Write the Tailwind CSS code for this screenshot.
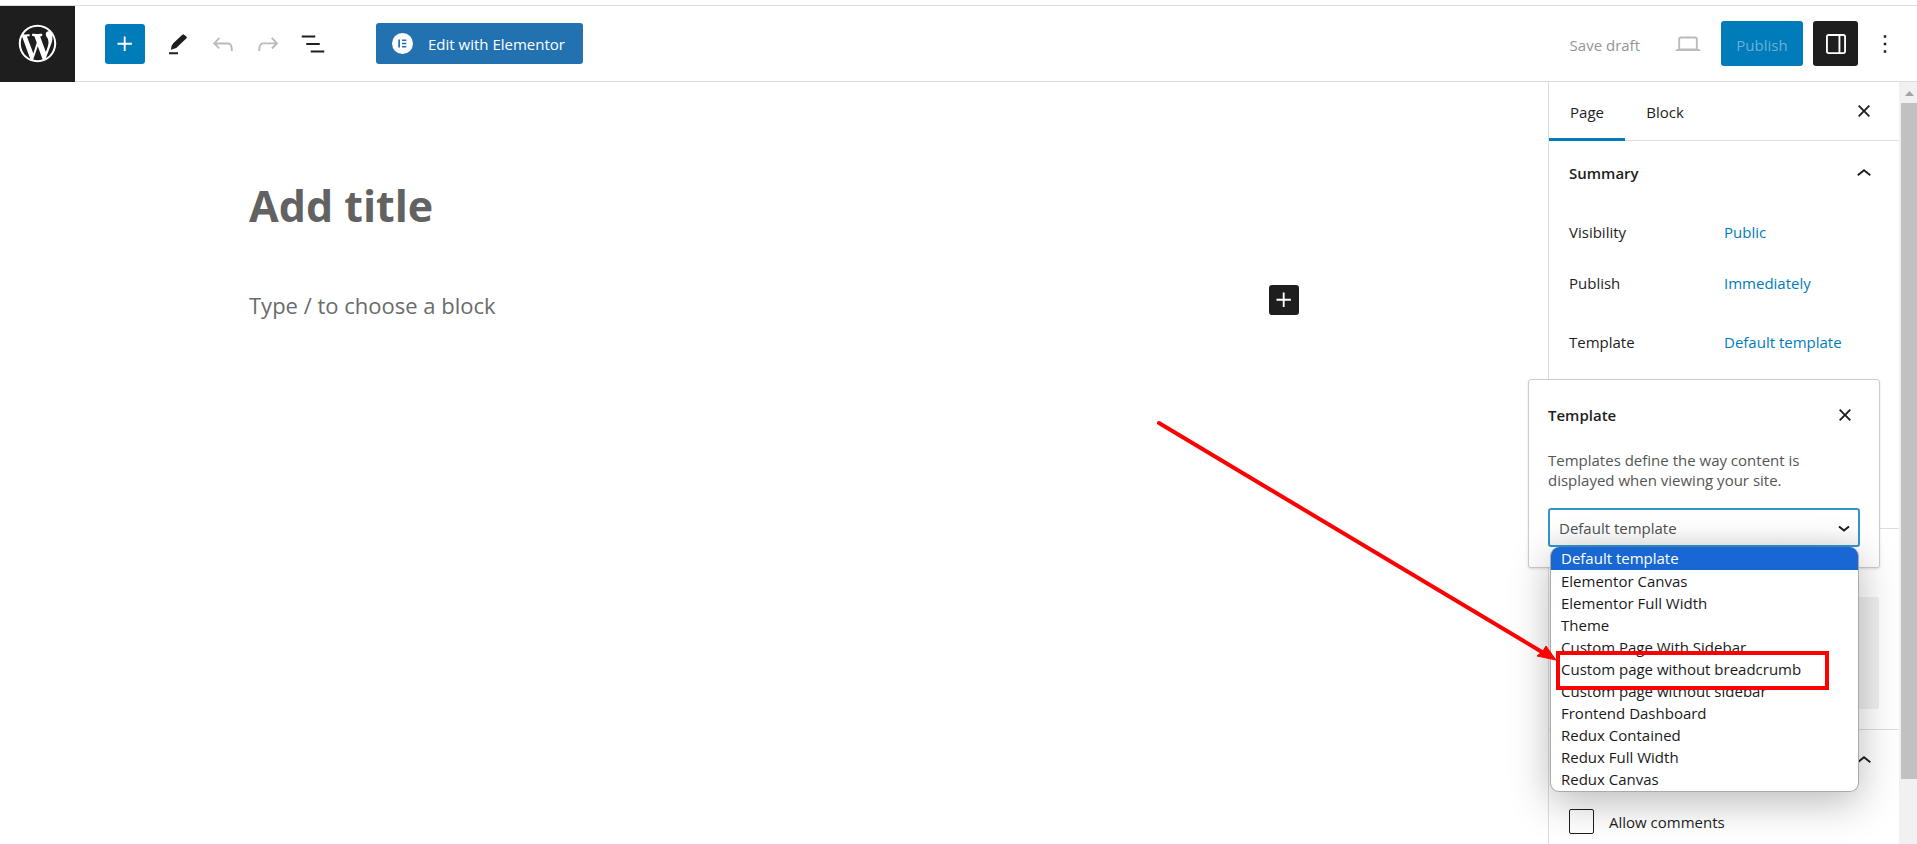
<!DOCTYPE html>
<html lang="en">
<head>
    <meta charset="UTF-8">
    <meta name="viewport" content="width=device-width, initial-scale=1.0">
    <title>Add New Page</title>
    <script src="https://cdn.jsdelivr.net/npm/@tailwindcss/browser@4"></script>
</head>
<body class="h-screen overflow-hidden bg-white pt-[5px] flex flex-col font-['Open_Sans','Noto_Sans',sans-serif] text-[15px] text-[#1e1e1e]">

    <!-- Top toolbar -->
    <header class="shrink-0 h-[77px] flex items-center border-y border-[#ddd]">
        <a href="#" aria-label="View pages" class="w-[75px] h-[76px] bg-[#1e1e1e] text-white flex items-center justify-center">
            <svg class="w-[45px] h-[45px]" viewBox="-2 -2 24 24" fill="currentColor"><path d="M20 10c0-5.51-4.49-10-10-10C4.48 0 0 4.49 0 10c0 5.52 4.48 10 10 10 5.51 0 10-4.48 10-10zM7.78 15.37L4.37 6.22c.55-.02 1.17-.08 1.17-.08.5-.06.44-1.13-.06-1.11 0 0-1.45.11-2.37.11-.18 0-.37 0-.58-.01C4.12 2.69 6.87 1.11 10 1.11c2.33 0 4.45.87 6.05 2.34-.68-.11-1.65.39-1.65 1.58 0 .74.45 1.36.9 2.1.35.61.55 1.36.55 2.46 0 1.49-1.4 5-1.4 5l-3.03-8.37c.54-.02.82-.17.82-.17.5-.05.44-1.25-.06-1.22 0 0-1.44.12-2.38.12-.87 0-2.33-.12-2.33-.12-.5-.03-.56 1.2-.06 1.22l.92.08 1.26 3.41zM17.41 10c.24-.64.74-1.87.43-4.25.7 1.29 1.05 2.71 1.05 4.25 0 3.29-1.73 6.24-4.4 7.78.97-2.59 1.94-5.2 2.92-7.78zM6.1 18.09C3.12 16.65 1.11 13.53 1.11 10c0-1.3.23-2.48.72-3.59C3.25 10.3 4.67 14.2 6.1 18.09zm4.03-6.63l2.58 6.98c-.86.29-1.76.45-2.71.45-.79 0-1.57-.11-2.29-.33.81-2.38 1.62-4.74 2.42-7.1z"/></svg>
        </a>

        <button aria-label="Toggle block inserter" class="ml-[30px] w-10 h-10 rounded-[3px] bg-[#007cba] text-white flex items-center justify-center">
            <svg class="w-[30px] h-[30px]" viewBox="0 0 24 24" fill="currentColor"><path d="M11 12.5V17.5H12.5V12.5H17.5V11H12.5V6H11V11H6V12.5H11Z"/></svg>
        </button>
        <div class="flex items-center gap-[15px] ml-[18px]">
            <button aria-label="Tools" class="w-[30px] h-10 flex items-center justify-center">
                <svg class="w-[30px] h-[30px]" viewBox="0 0 24 24" fill="currentColor"><path d="M16.300 4.200L19.200 6.300 18.600 7.500 10.600 15.100 6.300 16.600 6.900 13.400 8.400 11.200 15 4.900zM4.800 18.600h7.200v1.500H4.800z"/></svg>
            </button>
            <button aria-label="Undo" class="w-[30px] h-10 text-[#bbb] flex items-center justify-center">
                <svg class="w-[30px] h-[30px]" viewBox="0 0 24 24" fill="currentColor"><path d="M18.3 11.7c-.6-.6-1.4-.9-2.3-.9H6.7l2.9-3.3-1.1-1-4.5 5L8.5 16l1-1-2.7-2.7H16c.5 0 .9.2 1.3.5 1 1 1 3.4 1 4.5v.3h1.5v-.2c0-1.5 0-4.3-1.5-5.7z"/></svg>
            </button>
            <button aria-label="Redo" class="w-[30px] h-10 text-[#bbb] flex items-center justify-center">
                <svg class="w-[30px] h-[30px]" viewBox="0 0 24 24" fill="currentColor"><path d="M15.6 6.5l-1.1 1 2.9 3.3H8c-.9 0-1.7.3-2.3.9-1.4 1.5-1.4 4.2-1.4 5.6v.2h1.5v-.3c0-1.1 0-3.5 1-4.5.3-.3.7-.5 1.3-.5h9.2L14.5 15l1.1 1.1 4.6-4.6-4.6-5z"/></svg>
            </button>
            <button aria-label="Document overview" class="w-[30px] h-10 flex items-center justify-center">
                <svg class="w-[30px] h-[30px]" viewBox="0 0 24 24" fill="currentColor"><path d="M13.8 5.2H3v1.5h10.8V5.2zm-3.6 12v1.5H21v-1.5H10.2zm7.2-6H6.6v1.5h10.8v-1.5z"/></svg>
            </button>
        </div>

        <button class="ml-[48px] h-[41px] w-[207px] pl-4 rounded-[3px] bg-[#2271b1] text-white flex items-center gap-[15px] whitespace-nowrap">
            <svg class="w-[21px] h-[21px] shrink-0" viewBox="0 0 21 21"><circle cx="10.500" cy="10.500" r="10.500" fill="#fff"/><path d="M6.300 6.500h1.700v8h-1.700zM10 6.500h4.300v1.500H10zM10 9.750h4.300v1.500H10zM10 13h4.300v1.500H10z" fill="#2271b1"/></svg>
            <span class="pt-px">Edit with Elementor</span>
        </button>

        <div class="ml-auto flex items-center">
            <button class="pt-1 text-[#949494]" disabled>Save draft</button>
            <button aria-label="Preview" class="ml-[33px] text-[#bbb]">
                <svg class="w-[30px] h-[30px]" viewBox="0 0 24 24" fill="currentColor"><path d="M20.500 16h-.7V8c0-1.100-.9-2-2-2H6.200c-1.100 0-2 .9-2 2v8h-.7c-.8 0-1.500.7-1.500 1.500h20c0-.8-.7-1.500-1.500-1.500zM5.700 8c0-.3.2-.5.5-.5h11.600c.3 0 .5.2.5.5v7.600H5.700V8z"/></svg>
            </button>
            <button class="ml-[18px] w-[82px] h-[45px] pt-1 rounded-[3px] bg-[#007cba] text-[#66b0d6]">Publish</button>
            <button aria-label="Settings" class="ml-[10px] w-[45px] h-[45px] rounded-[3px] bg-[#1e1e1e] text-white flex items-center justify-center">
                <svg class="w-[30px] h-[30px]" viewBox="0 0 24 24" fill="currentColor"><path d="M18 4H6c-1.100 0-2 .9-2 2v12c0 1.100.9 2 2 2h12c1.100 0 2-.9 2-2V6c0-1.100-.9-2-2-2zm-4 14.500H6c-.3 0-.5-.2-.5-.5V6c0-.3.2-.5.5-.5h8v13zm4.500-.5c0 .3-.2.5-.5.5h-2.500v-13H18c.3 0 .5.2.5.5v12z"/></svg>
            </button>
            <button aria-label="Options" class="ml-3 mr-[17px]">
                <svg class="w-[30px] h-[30px]" viewBox="0 0 24 24" fill="currentColor"><path d="M13 19h-2v-2h2v2zm0-6h-2v-2h2v2zm0-6h-2V5h2v2z"/></svg>
            </button>
        </div>
    </header>

    <div class="flex-1 min-h-0 flex">

        <!-- Editor canvas -->
        <main class="flex-1 min-w-0">
            <div class="max-w-[1050px] mx-auto pt-[94px]">
                <input type="text" aria-label="Add title" placeholder="Add title" class="block w-full h-[60px] text-[43px] font-bold outline-none placeholder:text-[#626262]">
                <div class="mt-[49px] h-[30px] flex items-center">
                    <input type="text" aria-label="Block" placeholder="Type / to choose a block" class="flex-1 h-10 mt-[10px] text-[22px] outline-none placeholder:text-[#6b6b6b]">
                    <button aria-label="Add block" class="w-[30px] h-[30px] rounded-[3px] bg-[#1e1e1e] text-white">
                        <svg class="w-[30px] h-[30px]" viewBox="0 0 24 24" fill="currentColor"><path d="M11 12.500V17.500H12.500V12.500H17.500V11H12.500V6H11V11H6V12.500H11Z"/></svg>
                    </button>
                </div>
            </div>
        </main>

        <!-- Settings sidebar -->
        <aside class="relative w-[351px] shrink-0 border-l border-[#ddd]">
            <div class="h-[59px] flex border-b border-[#ddd]">
                <button class="w-[76px] h-[59px] pt-[5px] border-b-3 border-[#007cba] font-medium">Page</button>
                <button class="w-20 h-[59px] pt-[2px] font-medium">Block</button>
                <button aria-label="Close settings" class="ml-auto mr-5">
                    <svg class="w-[30px] h-[30px]" viewBox="0 0 24 24" fill="currentColor"><path d="M12 13.060l3.712 3.713 1.061-1.060L13.061 12l3.712-3.712-1.060-1.060L12 10.938 8.288 7.227l-1.061 1.060L10.939 12l-3.712 3.712 1.060 1.061L12 13.061z"/></svg>
                </button>
            </div>

            <section class="h-[388px] px-5 border-b border-[#ddd]">
                <h2 class="h-[65px] font-semibold">
                    <button class="w-full h-full flex items-center justify-between">Summary
                        <svg class="w-[30px] h-[30px]" viewBox="0 0 24 24" fill="currentColor"><path d="M6.500 12.400L12 8l5.500 4.400-.9 1.200L12 10l-4.500 3.600-1-1.200z"/></svg>
                    </button>
                </h2>
                <div class="h-[53px] flex items-center"><span class="w-[155px]">Visibility</span><a href="#" class="text-[#007cba]">Public</a></div>
                <div class="h-[49px] flex items-center"><span class="w-[155px]">Publish</span><a href="#" class="text-[#007cba]">Immediately</a></div>
                <div class="h-[69px] flex items-center"><span class="w-[155px]">Template</span><a href="#" class="text-[#007cba]">Default template</a></div>
            </section>

            <section class="h-[201px] px-5 pt-[68px] border-b border-[#ddd]">
                <div class="h-[112px] rounded-[2px] bg-[#f0f0f0]"></div>
            </section>

            <section class="px-5">
                <button aria-label="Discussion" class="w-full h-[61px] flex items-center justify-end">
                    <svg class="w-[30px] h-[30px]" viewBox="0 0 24 24" fill="currentColor"><path d="M6.500 12.400L12 8l5.500 4.400-.9 1.200L12 10l-4.500 3.600-1-1.200z"/></svg>
                </button>
                <div class="pt-[18px] flex items-center gap-[15px]">
                    <input id="allow-comments" type="checkbox" class="appearance-none w-[25px] h-[25px] rounded-[2px] border border-[#1e1e1e] bg-white">
                    <label for="allow-comments" class="pt-px">Allow comments</label>
                </div>
            </section>

            <!-- Template popover -->
            <div class="absolute -left-[21px] top-[297px] w-[352px] h-[189px] px-[19px] bg-white border border-[#ccc] rounded-[3px] shadow-sm">
                <div class="h-[70px] flex items-center justify-between">
                    <h2 class="font-semibold">Template</h2>
                    <button aria-label="Close">
                        <svg class="w-[30px] h-[30px]" viewBox="0 0 24 24" fill="currentColor"><path d="M12 13.060l3.712 3.713 1.061-1.060L13.061 12l3.712-3.712-1.060-1.060L12 10.938 8.288 7.227l-1.061 1.060L10.939 12l-3.712 3.712 1.060 1.061L12 13.061z"/></svg>
                    </button>
                </div>
                <p class="leading-5 text-[#555]">Templates define the way content is displayed when viewing your site.</p>
                <div class="relative mt-[18px]">
                    <select aria-label="Template" class="appearance-none block w-full h-[39px] px-[9px] pt-[2px] rounded-[3px] border-2 border-[#3594c7] bg-linear-to-b from-white from-50% to-[#f4f4f4] text-[#505050] outline-none">
                        <option>Default template</option>
                        <option>Elementor Canvas</option>
                    </select>
                    <svg class="absolute right-1 top-2 w-6 h-6 pointer-events-none" viewBox="0 0 24 24" fill="none" stroke="currentColor" stroke-width="2"><path d="M7 10.500l5 4 5-4"/></svg>

                    <!-- Open option list -->
                    <ul role="listbox" aria-label="Template" class="absolute left-[2px] right-px top-[39px] h-[245px] overflow-hidden rounded-[9px] border border-[#aaa] border-t-0 bg-white text-[#1a1a1a] leading-[22px] shadow-[0_10px_40px_rgba(0,0,0,0.28)] [&>li]:px-[10px]">
                        <li role="option" aria-selected="true" class="h-[23px] bg-[#1967d2] text-white">Default template</li>
                        <li role="option">Elementor Canvas</li>
                        <li role="option">Elementor Full Width</li>
                        <li role="option">Theme</li>
                        <li role="option">Custom Page With Sidebar</li>
                        <li role="option">Custom page without breadcrumb</li>
                        <li role="option">Custom page without sidebar</li>
                        <li role="option">Frontend Dashboard</li>
                        <li role="option">Redux Contained</li>
                        <li role="option">Redux Full Width</li>
                        <li role="option">Redux Canvas</li>
                    </ul>

                    <!-- Arrow and highlight box -->
                    <div class="absolute left-[8px] top-[143px] w-[273px] h-[39px] border-4 border-[#f00]"></div>
                    <svg class="absolute -left-[398px] top-[-93px] w-[410px] h-[260px] pointer-events-none" viewBox="0 0 410 260"><path d="M9 8L392 237" stroke="#f00" stroke-width="4" stroke-linecap="round"/><path d="M406 245L396 231 393 236 387 241z" fill="#f00" stroke="#f00"/></svg>
                </div>
            </div>
        </aside>

        <!-- Scrollbar -->
        <div class="w-[18px] shrink-0 bg-[#f1f1f1] flex flex-col items-end">
            <div class="h-[21px] w-4 flex justify-center pt-[9px]">
                <svg class="w-[9px] h-[5px]" viewBox="0 0 9 5"><path d="M0 5L4.500 0 9 5z" fill="#a3a3a3"/></svg>
            </div>
            <div class="w-4 h-[676px] bg-[#c1c1c1]"></div>
        </div>
    </div>
</body>
</html>
